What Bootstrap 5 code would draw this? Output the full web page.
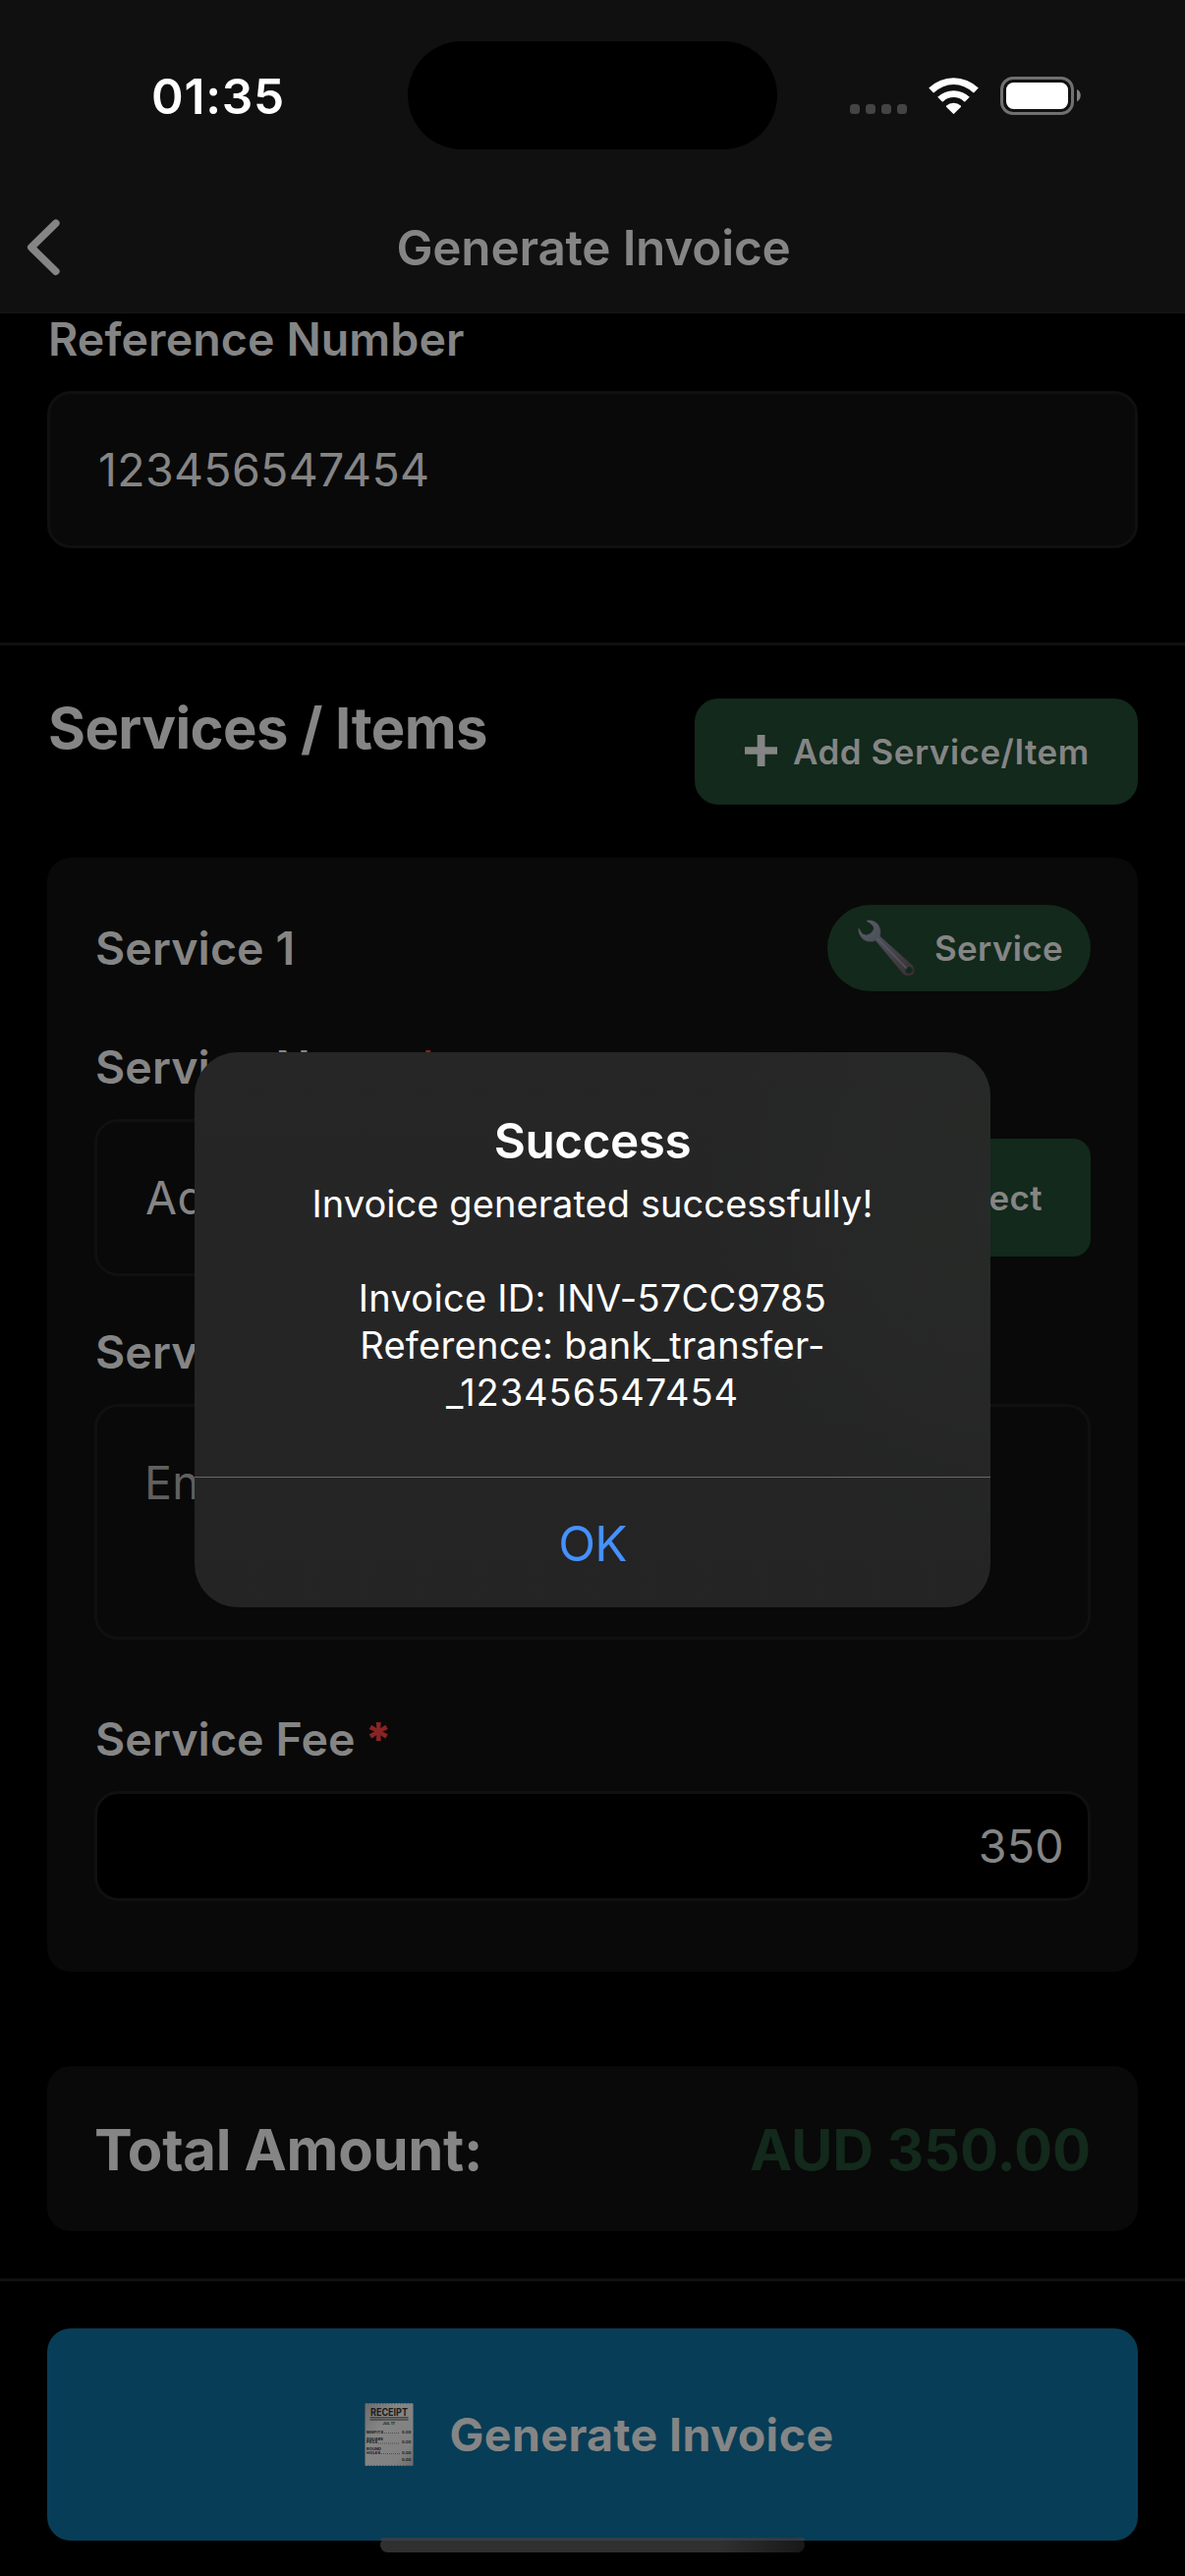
<!DOCTYPE html>
<html lang="en" data-bs-theme="dark">
<head>
<meta charset="utf-8">
<title>Generate Invoice</title>
<meta name="viewport" content="width=device-width, initial-scale=1">
<link href="https://cdn.jsdelivr.net/npm/bootstrap@5.3.0/dist/css/bootstrap.min.css" rel="stylesheet">
<style>
  :root { --ink: #858585; --panel: #090909; --edge: #101010; --green: #12291b; }
  html, body { background: #000; }
  body { font-family: Inter, "Liberation Sans", sans-serif; color: var(--ink); }
  svg { display: block; flex: none; }
  .screen { width: 1206px; height: 2622px; background: #000; }

  .app-header { background: #101010; height: 319px; border-bottom: 1px solid #161616; }
  .status-row { height: 186px; padding-top: 10px; }
  .status-side { width: 415px; }
  .clock { padding-left: 154px; font-size: 49.5px; font-weight: 600; letter-spacing: .8px; line-height: 60px; color: #fff; }
  .island { width: 376px; height: 110px; border-radius: 55px; background: #000; margin-bottom: 2px; }
  .status-icons { padding-left: 74px; }
  .title-row { height: 132px; padding: 0 27px; }
  .title-row .side { width: 35px; }
  .page-title { font-size: 49.5px; font-weight: 600; letter-spacing: -.23px; line-height: 60px; padding-left: 2px; }

  .page-x { padding-left: 48px; padding-right: 48px; }
  .field-label { display: block; font-size: 46.5px; font-weight: 600; letter-spacing: .1px; line-height: 52px; margin-bottom: 27px; padding-left: 1px; }
  .field-label .req { color: #8a2424; font-weight: 800; margin-left: -2px; }
  .box, .box:focus { background: var(--panel); border: 3px solid var(--edge); border-radius: 24px; color: var(--ink);
         font-size: 46.5px; letter-spacing: .33px; line-height: 58px; height: 160px; padding: 0 49px; resize: none; overflow: hidden; box-shadow: none; }
  .box::placeholder { color: #606060; opacity: 1; }
  .box-area { height: 240px; padding: 48px 49px 0 48px; }
  .box-fee { background: #000; height: 112px; padding: 0 24px; }
  .rule { height: 3px; background: var(--edge); }

  .heading { font-size: 58px; font-weight: 700; letter-spacing: -.6px; line-height: 61px; padding-left: 1px; }
  .btn-green { --bs-btn-bg: var(--green); --bs-btn-color: var(--ink); --bs-btn-border-width: 0; border-radius: 24px;
               font-size: 35px; font-weight: 600; line-height: 48px; padding: 0; }
  .btn-add { width: 451px; height: 108px; letter-spacing: .5px; padding-left: 51px; gap: 16px; }
  .btn-add svg { margin-bottom: 2px; }
  .type-pill { width: 268px; height: 88px; border-radius: 44px; letter-spacing: .33px; padding-left: 31px; gap: 20px; }
  .btn-pick { width: 216px; height: 120px; border-radius: 18px; letter-spacing: .33px; padding-right: 49px; }

  .panel { background: var(--panel); border-radius: 24px; border: 0; padding: 48px; }
  .service-card { height: 1134px; margin-top: 54px; }
  .service-title { font-size: 46.5px; font-weight: 600; letter-spacing: .1px; line-height: 52px; padding-left: 1px; }
  .total-card { height: 168px; margin-top: 96px; padding-top: 2px; padding-bottom: 0; }
  .amount { color: var(--green); letter-spacing: -.1px; }
  .total-label { letter-spacing: -.31px; padding-left: 0; }

  .btn-generate { --bs-btn-bg: #083d57; --bs-btn-color: var(--ink); --bs-btn-border-width: 0; height: 216px; border-radius: 24px;
                  font-size: 46.5px; font-weight: 700; letter-spacing: .43px; line-height: 58px; gap: 36px; padding: 0 0 0 14px; }
  .home-bar { left: 387px; top: 2583px; width: 432px; height: 15px; border-radius: 8px;
              background: linear-gradient(90deg, #303030 0%, #303030 80%, #181818 100%); }
  .home-bar::before { content: ""; position: absolute; inset: 0 0 auto 0; height: 3px; border-radius: 8px 8px 0 0; background: #34444c; opacity: .8; }

  .alert-box { left: 198px; top: 1071px; width: 810px; height: 565px; border: 0; border-radius: 44px; overflow: hidden; color: #fff; text-align: center;
               background: radial-gradient(ellipse 300px 360px at 100% 28%, #272a28 0%, rgba(39,41,40,.6) 45%, rgba(37,37,37,0) 100%), linear-gradient(180deg, #262626, #242424); }
  .alert-copy { height: 432px; padding-top: 60px; }
  .alert-title { font-size: 49.5px; font-weight: 600; letter-spacing: -.44px; line-height: 60px; margin-bottom: 10px; }
  .alert-text { font-size: 38px; line-height: 48px; letter-spacing: .07px; }
  .alert-text .wide { letter-spacing: .28px; }
  .alert-text .wider { letter-spacing: .95px; }
  .alert-ok { border: 0; border-top: 1px solid #686868; height: 133px; width: 100%; border-radius: 0; font-size: 49.5px; line-height: 60px; letter-spacing: -.8px; padding: 1px 0 0; color: #4591ff; }
</style>
</head>
<body>
<div class="screen position-relative overflow-hidden mx-auto">

  <header class="app-header">
    <div class="status-row d-flex align-items-center">
      <div class="status-side"><div class="clock">01:35</div></div>
      <div class="island"></div>
      <div class="status-side status-icons d-flex">
        <svg width="235" height="40" viewBox="865 78 235 40">
          <g fill="#444">
            <rect x="865" y="106" width="10" height="10" rx="3.5"/><rect x="881" y="106" width="10" height="10" rx="3.5"/>
            <rect x="897" y="106" width="10" height="10" rx="3.5"/><rect x="913" y="106" width="10" height="10" rx="3.5"/>
          </g>
          <g fill="#fff">
            <path d="M945.2 89.5a36.5 36.5 0 0 1 50.6 0l-4.3 4.6q-.7.7-1.4 0a28 28 0 0 0-39.2 0q-.7.7-1.4 0z"/>
            <path d="M954.2 98.8a23.5 23.5 0 0 1 32.6 0l-4.4 4.4q-.7.6-1.4 0a15.5 15.5 0 0 0-21 0q-.7.6-1.4 0z"/>
            <path d="M963.2 107.6a10.8 10.8 0 0 1 14.6 0q.6.7 0 1.3l-6.6 6.7q-.7.6-1.4 0l-6.6-6.7q-.6-.6 0-1.3z"/>
          </g>
          <rect x="1019.5" y="79.500" width="72" height="36" rx="11.500" fill="none" stroke="#707070" stroke-width="3"/>
          <rect x="1024" y="84" width="63" height="27" rx="7.500" fill="#fff"/>
          <path d="M1096 91c5 2 5 10 0 12.500z" fill="#808080"/>
        </svg>
      </div>
    </div>
    <div class="title-row d-flex align-items-center justify-content-between">
      <div class="side">
        <svg width="35" height="58" viewBox="0 0 35 58"><path d="M29.800 4.200L4.800 28.700L29.800 53.200" fill="none" stroke="#858585" stroke-width="7.600" stroke-linecap="round" stroke-linejoin="round"/></svg>
      </div>
      <div class="page-title">Generate Invoice</div>
      <div class="side"></div>
    </div>
  </header>

  <main>
    <section class="page-x">
      <label class="field-label" for="ref">Reference Number</label>
      <input id="ref" class="form-control box" value="123456547454">
    </section>
    <div class="rule" style="margin-top:96px"></div>

    <section class="page-x" style="padding-top:54px">
      <div class="d-flex justify-content-between align-items-start">
        <div class="heading">Services / Items</div>
        <button class="btn btn-green btn-add d-flex align-items-center text-nowrap">
          <svg width="33" height="32" viewBox="0 0 33 32"><path d="M12.700 0h7.800v12.200H33v7.600H20.500V32h-7.800V19.800H0v-7.600h12.700z" fill="#858585"/></svg>
          <span>Add Service/Item</span>
        </button>
      </div>

      <div class="card panel service-card d-block">
        <div class="d-flex justify-content-between align-items-center">
          <div class="service-title">Service 1</div>
          <button class="btn btn-green type-pill d-flex align-items-center">
            <svg width="58" height="58" viewBox="580 708 174 174">
              <defs><linearGradient id="steel" x1="0" y1="0" x2="1" y2="1"><stop offset="0" stop-color="#5b6068"/><stop offset=".5" stop-color="#454850"/><stop offset="1" stop-color="#3a2f30"/></linearGradient></defs>
              <path fill="url(#steel)" stroke="#26282b" stroke-width="2" fill-rule="evenodd" d="M607 709C630 707 650 721 650 745Q650 752 649 759L748 848Q757 862 750 874Q738 884 720 876L634 773Q610 783 592 765Q579 750 581 734Q585 731 588 741Q594 755 606 754Q622 752 628 736Q628 724 607 714ZM736 853Q726 854 725 864Q727 873 738 872Q748 869 747 860Q744 853 736 853Z"/>
              <path d="M640 766L728 856" stroke="#65666b" stroke-width="5" stroke-linecap="round" opacity=".55"/>
            </svg>
            <span>Service</span>
          </button>
        </div>

        <label class="field-label" style="margin-top:51px" for="sname">Service Name <span class="req">*</span></label>
        <div class="d-flex align-items-center gap-4">
          <input id="sname" class="form-control box" value="Additional">
          <button class="btn btn-green btn-pick flex-shrink-0 text-end">Select</button>
        </div>

        <label class="field-label" style="margin-top:51px" for="sdesc">Service Description</label>
        <textarea id="sdesc" class="form-control box box-area" placeholder="Enter details"></textarea>

        <label class="field-label" style="margin-top:75px" for="fee">Service Fee <span class="req">*</span></label>
        <input id="fee" class="form-control box box-fee text-end" value="350">
      </div>

      <div class="card panel total-card flex-row justify-content-between align-items-center">
        <div class="heading total-label">Total Amount:</div>
        <div class="heading amount">AUD 350.00</div>
      </div>
    </section>
  </main>

  <footer>
    <div class="rule" style="margin-top:48px"></div>
    <div class="page-x" style="padding-top:48px">
      <button class="btn btn-generate w-100 d-flex align-items-center justify-content-center">
        <svg width="50" height="66" viewBox="0 0 50 66">
          <defs><linearGradient id="paper" x1="0" y1="0" x2="1" y2="1"><stop offset="0" stop-color="#6c6c6c"/><stop offset=".35" stop-color="#858585"/><stop offset=".8" stop-color="#808080"/><stop offset="1" stop-color="#6a6a6a"/></linearGradient></defs>
          <rect x=".5" y="1" width="49" height="64" fill="url(#paper)"/>
          <path d="M0 .8H50M0 65.200H50" stroke="#083d57" stroke-width="1.400" stroke-dasharray="1.500 1.500"/>
          <path d="M5.500 15.800H44.500M5.500 18H44.500" stroke="#2a2a2a" stroke-width="1"/>
          <g font-family="Inter, sans-serif" font-weight="700" fill="#191919" letter-spacing="0">
            <text x="25" y="13.800" font-size="10" text-anchor="middle" textLength="38" lengthAdjust="spacingAndGlyphs">RECEIPT</text>
            <g font-size="4">
              <text x="24.500" y="22.800" text-anchor="middle">JUL 17</text>
              <text x="2" y="31.800" textLength="17">MISFITS</text><text x="38" y="31.800" textLength="9.500">0.00</text>
              <text x="2" y="38.500" textLength="17">SQUARE</text>
              <text x="2" y="42.300" textLength="11">PEGS</text><text x="38" y="42.300" textLength="9.500">0.00</text>
              <text x="2" y="49" textLength="15">ROUND</text>
              <text x="2" y="52.800" textLength="14">HOLES</text><text x="38" y="52.800" textLength="9.500">0.00</text>
              <text x="38" y="60.300" textLength="9.500">0.00</text>
            </g>
          </g>
          <path d="M20 31.500H36M14 42H36M17 52.500H36" stroke="#444" stroke-width=".8" stroke-dasharray="1 1"/>
        </svg>
        <span>Generate Invoice</span>
      </button>
    </div>
  </footer>

  <div class="home-bar position-absolute"></div>

  <div class="modal-content alert-box position-absolute" role="alertdialog">
    <div class="alert-copy">
      <div class="alert-title">Success</div>
      <div class="alert-text">Invoice generated successfully!<br><br><span class="wide">Invoice ID: INV-57CC9785<br>Reference: bank_transfer-</span><br><span class="wider">_123456547454</span></div>
    </div>
    <button class="btn alert-ok">OK</button>
  </div>
</div>
<script src="https://cdn.jsdelivr.net/npm/bootstrap@5.3.0/dist/js/bootstrap.bundle.min.js"></script>
</body>
</html>
